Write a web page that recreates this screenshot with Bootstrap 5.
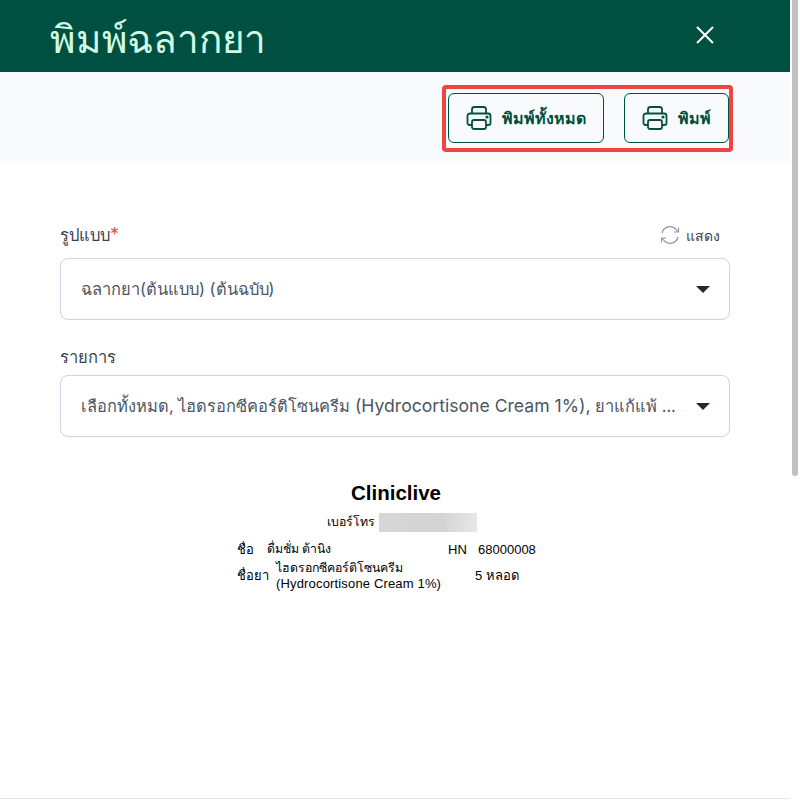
<!DOCTYPE html>
<html lang="th">
<head>
<meta charset="utf-8">
<link href="https://cdn.jsdelivr.net/npm/bootstrap@5.3.0/dist/css/bootstrap.min.css" rel="stylesheet">
<style>
html,body{height:805px;overflow:hidden;background:#fff}
body{font-family:Inter,"Noto Sans",sans-serif}
.shell{height:805px;width:800px}
.main-pane{width:790px;height:799px;border-bottom:1px solid #e5e7eb}
.scroll-rail{width:10px;height:799px;background:#fff}
.scroll-thumb{width:6px;height:476px;background:#c1c1c1;margin-left:2px;border-radius:0 0 3px 3px}
.top-bar{height:72px;background:#005041;padding:0 70px 0 50px}
.top-title{font-family:"Liberation Sans","Noto Sans",sans-serif;font-size:38.700px;letter-spacing:-.2px;line-height:60px;color:#d1fae5;margin:8px 0 0;font-weight:500}
.close-x{width:30px;height:30px;border:0;background:none;padding:0;margin-top:-2px}
.tool-bar{height:91px;background:#f9fafb;padding:13px 57px 0 0}
.hl-box{border:4px solid #ef4444;border-radius:4px;padding:4px 0 5px 2px;gap:20px}
.pr-btn{height:50px;border:1px solid #005041;border-radius:6px;background:none;color:#005041;font-size:16px;font-weight:700;font-family:Inter,"Noto Sans",sans-serif;padding:0 17px;gap:10px;white-space:nowrap}
.form-zone{padding:60px 60px 0}
.fld-label{font-size:16.500px;line-height:24px;color:#374151}
.req{color:#f05252;font-size:18px;line-height:0}
.show-link{font-size:14px;color:#374151;gap:6px;padding-right:10px}
.label-row{margin-bottom:11px}
.label-two{margin:25px 0 6px}
.pick{height:62px;border:1px solid #cbd5e1;border-radius:8px;padding:0 19px 0 20px;color:#4b5563;font-size:16.400px}
.pick-text{white-space:nowrap;overflow:hidden}
.latin-run{font-size:17.600px}
.caret-tri{width:0;height:0;border-left:7px solid transparent;border-right:7px solid transparent;border-top:7px solid #1f2937}
.slip{margin-top:44px;font-family:"Liberation Sans","Noto Sans",sans-serif;color:#000;font-size:13px;line-height:15px}
.slip-name{font-size:20.500px;font-weight:700;line-height:24px;padding-left:2px}
.phone-row{padding-left:14px;margin-top:8px;font-size:12.300px}
.blurred{display:inline-block;width:98px;height:19px;background:linear-gradient(90deg,#d6d6d6,#d4d4d4 65%,#e8e8e8)}
.slip-grid{width:316px;margin-top:10px}
.row-two{margin-top:3px}
.c-a1{width:30px}.c-a2{width:181px;font-size:12.300px}.c-a3{width:30px}
.c-b1{width:39px}.c-b2{width:199px}
.thai-line{font-size:12.300px}
.latin-line{letter-spacing:.16px}
</style>
</head>
<body>
<div class="shell d-flex">
  <div class="main-pane d-flex flex-column">
    <div class="top-bar d-flex justify-content-between align-items-center">
      <h1 class="top-title">พิมพ์ฉลากยา</h1>
      <button class="close-x d-flex align-items-center justify-content-center" aria-label="close">
        <svg width="20" height="20" viewBox="0 0 20 20" fill="none" stroke="#fff" stroke-width="2"><path d="M2 2 18 18M18 2 2 18"/></svg>
      </button>
    </div>
    <div class="tool-bar d-flex justify-content-end align-items-start">
      <div class="hl-box d-flex">
        <button class="pr-btn d-flex align-items-center">
          <svg width="26" height="26" viewBox="0 0 26 26" fill="none" stroke="#005041" stroke-width="1.800"><path d="M6 9V4.500A2.500 2.500 0 0 1 8.500 2h9A2.500 2.500 0 0 1 20 4.500V9"/><path d="M6 20H3.500A2 2 0 0 1 1.500 18v-7A2.500 2.500 0 0 1 4 8.500h18a2.500 2.500 0 0 1 2.500 2.500v7a2 2 0 0 1-2 2H20"/><rect x="6" y="15" width="14" height="9" rx="2"/><circle cx="21" cy="12" r=".7" fill="#005041"/></svg>
          พิมพ์ทั้งหมด
        </button>
        <button class="pr-btn d-flex align-items-center">
          <svg width="26" height="26" viewBox="0 0 26 26" fill="none" stroke="#005041" stroke-width="1.800"><path d="M6 9V4.500A2.500 2.500 0 0 1 8.500 2h9A2.500 2.500 0 0 1 20 4.500V9"/><path d="M6 20H3.500A2 2 0 0 1 1.500 18v-7A2.500 2.500 0 0 1 4 8.500h18a2.500 2.500 0 0 1 2.500 2.500v7a2 2 0 0 1-2 2H20"/><rect x="6" y="15" width="14" height="9" rx="2"/><circle cx="21" cy="12" r=".7" fill="#005041"/></svg>
          พิมพ์
        </button>
      </div>
    </div>
    <div class="form-zone flex-grow-1">
      <div class="label-row d-flex justify-content-between align-items-center">
        <span class="fld-label">รูปแบบ<span class="req">*</span></span>
        <span class="show-link d-flex align-items-center">
          <svg width="20" height="20" viewBox="0 0 20 20" fill="none" stroke="#8a97a8" stroke-width="1.200"><path d="M2 8A8.200 8.200 0 0 1 16.500 5L18 7"/><path d="M18.500 2.500V7H14"/><path d="M18 12A8.200 8.200 0 0 1 3.500 15L2 13"/><path d="M1.500 17.500V13H6"/></svg>
          แสดง
        </span>
      </div>
      <div class="pick d-flex align-items-center justify-content-between">
        <span class="pick-text">ฉลากยา(ต้นแบบ) (ต้นฉบับ)</span>
        <span class="caret-tri"></span>
      </div>
      <div class="fld-label label-two">รายการ</div>
      <div class="pick d-flex align-items-center justify-content-between">
        <span class="pick-text">เลือกทั้งหมด, ไฮดรอกซีคอร์ติโซนครีม <span class="latin-run">(Hydrocortisone Cream 1%),</span> ยาแก้แพ้ ...</span>
        <span class="caret-tri"></span>
      </div>
      <div class="slip">
        <div class="slip-name text-center">Cliniclive</div>
        <div class="phone-row d-flex justify-content-center align-items-center gap-1">เบอร์โทร <span class="blurred"></span></div>
        <div class="slip-grid mx-auto">
          <div class="d-flex align-items-center"><span class="c-a1">ชื่อ</span><span class="c-a2">ดื่มชั่ม ต้านิง</span><span class="c-a3">HN</span><span>68000008</span></div>
          <div class="row-two d-flex align-items-center"><span class="c-b1">ชื่อยา</span><span class="c-b2"><span class="thai-line">ไฮดรอกซีคอร์ติโซนครีม</span><br><span class="latin-line">(Hydrocortisone Cream 1%)</span></span><span>5 หลอด</span></div>
        </div>
      </div>
    </div>
  </div>
  <div class="scroll-rail"><div class="scroll-thumb"></div></div>
</div>
<script src="https://cdn.jsdelivr.net/npm/bootstrap@5.3.0/dist/js/bootstrap.bundle.min.js"></script>
</body>
</html>
